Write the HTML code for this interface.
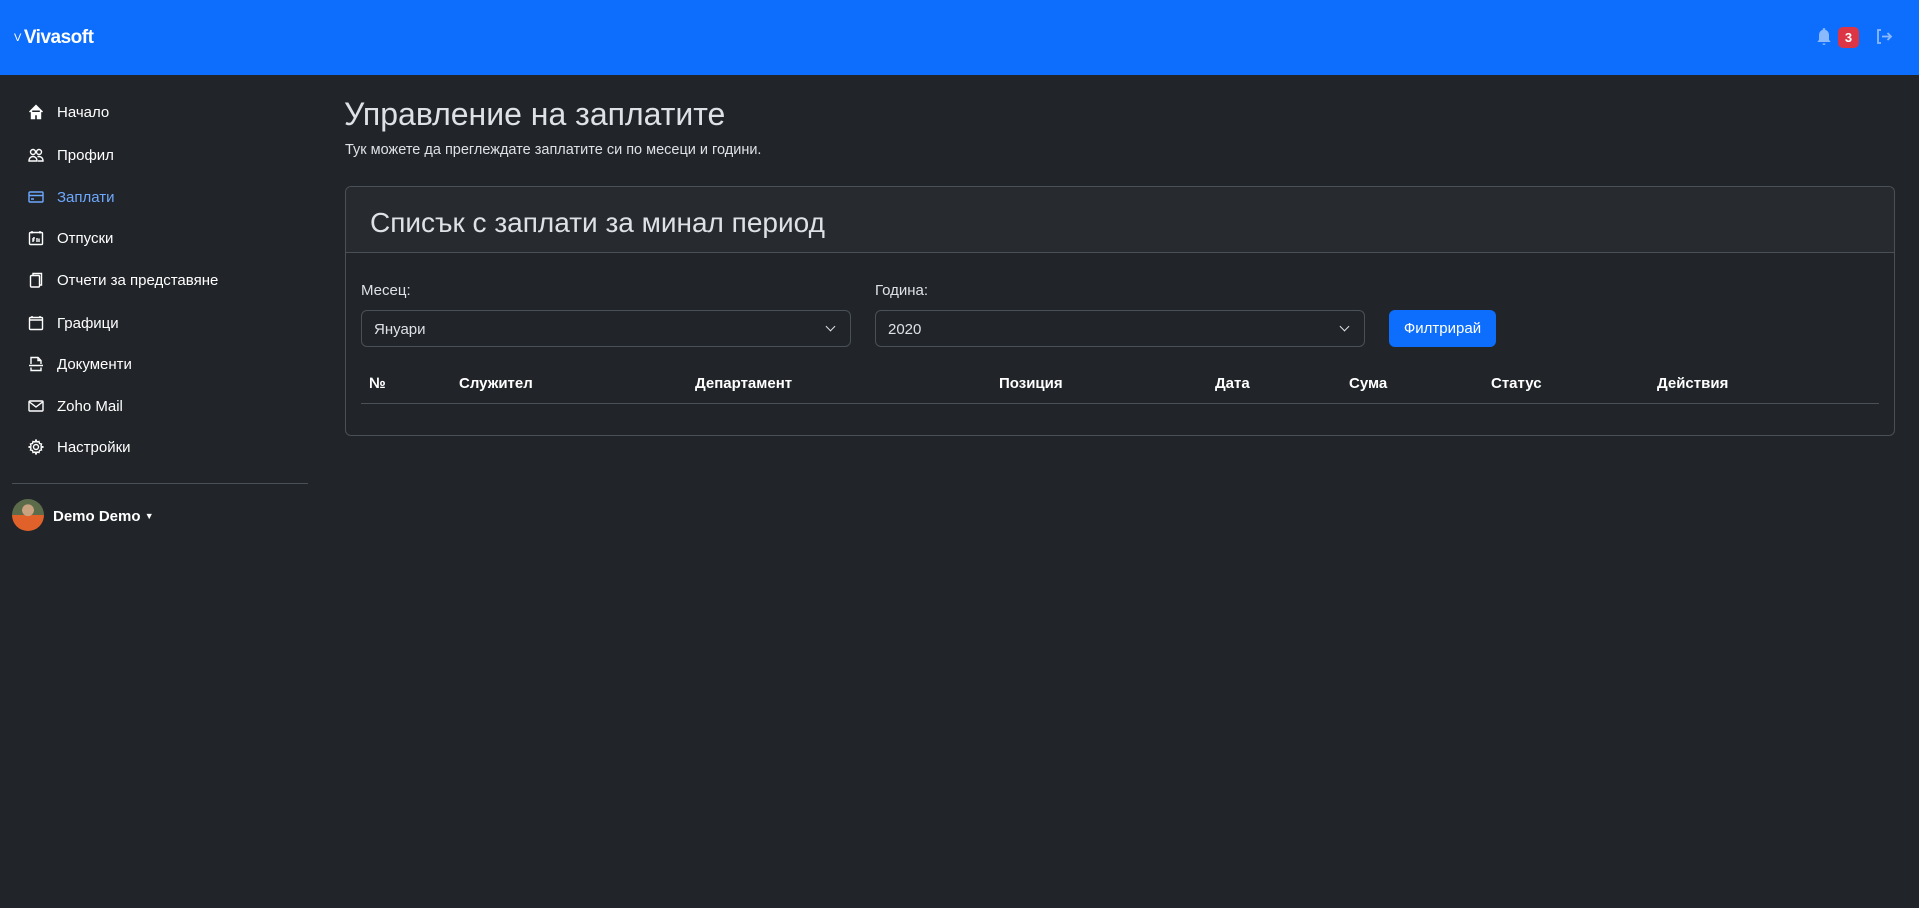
<!DOCTYPE html>
<html><head><meta charset="utf-8"><style>
*{box-sizing:border-box;margin:0;padding:0}
body{width:1919px;height:908px;background:#212529;color:#dee2e6;font-family:"Liberation Sans","Noto Sans CJK SC",sans-serif;position:relative;overflow:hidden}
.nav{position:absolute;left:0;top:0;width:1919px;height:75px;background:#0d6efd}
.logo{position:absolute;left:14px;top:27px;color:#fff;font-weight:bold;font-size:19px;letter-spacing:-0.5px}
.logo small{font-size:11px;font-weight:normal;margin-right:3px;position:relative;top:-2px}
.abs{position:absolute}
.item{position:absolute;left:28px;font-size:15px;color:#fff;display:flex;align-items:center;height:20px}
.item svg{width:16px;height:16px;margin-right:13px;fill:none;stroke:#fff;stroke-width:1.4}
.item.act{color:#6ea8fe}.item.act svg{stroke:#6ea8fe}
.card{position:absolute;left:345px;top:186px;width:1550px;height:250px;border:1px solid #495057;border-radius:6px;overflow:hidden}
.ch{height:66px;background:#272b30;border-bottom:1px solid #495057}
.sel{position:absolute;height:37px;border:1px solid #495057;border-radius:6px;font-size:15px;padding:10px 12px;color:#dee2e6}
.sel:after{content:"";position:absolute;right:16px;top:12px;width:6px;height:6px;border-right:1.5px solid #dee2e6;border-bottom:1.5px solid #dee2e6;transform:rotate(45deg)}
.th{position:absolute;top:375px;font-weight:bold;font-size:15px;color:#fff}
</style></head><body>
<div class="nav">
<div class="logo"><small>V</small>Vivasoft</div>
<svg class="abs" style="left:1817px;top:27px" width="14" height="20" viewBox="0 0 14 20"><path d="M7 1a1.3 1.3 0 0 1 1.3 1.3v.6A5 5 0 0 1 12 7.8v5l1.6 2.2H.4L2 12.8v-5a5 5 0 0 1 3.7-4.9v-.6A1.3 1.3 0 0 1 7 1z M5.5 16.5h3a1.5 1.5 0 0 1-3 0z" fill="#8bb9fe"/></svg>
<div class="abs" style="left:1838px;top:27px;width:21px;height:21px;background:#dc3545;border-radius:5px;color:#fff;font-size:13px;font-weight:bold;text-align:center;line-height:21px">3</div>
<svg class="abs" style="left:1876px;top:28px" width="17" height="17" viewBox="0 0 17 17" fill="none" stroke="#8bb9fe" stroke-width="1.8"><path d="M5 2H2v13h3M6 8.5h9M11.5 5l3.5 3.5-3.5 3.5"/></svg>
</div>

<div class="item" style="top:102px"><svg viewBox="0 0 16 16"><path d="M1.5 8L8 1.5 14.5 8M3.5 6.5V14.5h3v-4h3v4h3V6.5" fill="#fff"/></svg>Начало</div>
<div class="item" style="top:145px"><svg viewBox="0 0 16 16"><circle cx="5" cy="5" r="2.5"/><circle cx="11" cy="5" r="2.5"/><path d="M1 14c0-3 2-4.5 4-4.5s4 1.5 4 4.5zM9.5 9.7c.5-.2 1-.2 1.5-.2 2 0 4 1.5 4 4.5h-5"/></svg>Профил</div>
<div class="item act" style="top:187px"><svg viewBox="0 0 16 16"><rect x="1" y="3" width="14" height="10" rx="1"/><path d="M1 6.5h14M3 10h3"/></svg>Заплати</div>
<div class="item" style="top:228px"><svg viewBox="0 0 16 16"><rect x="1.5" y="2.5" width="13" height="12" rx="1"/><path d="M4 1v2.5M12 1v2.5M5 8v4M5 8h2M5 10h1.5M9 12V8M11 8.5v3.5"/></svg>Отпуски</div>
<div class="item" style="top:270px"><svg viewBox="0 0 16 16"><rect x="2.5" y="3.5" width="9" height="11.5" rx="1"/><path d="M5 3.5V1.5h8.5v11.5h-2"/></svg>Отчети за представяне</div>
<div class="item" style="top:313px"><svg viewBox="0 0 16 16"><rect x="1.5" y="2.5" width="13" height="12" rx="1"/><path d="M1.5 5h13M4 1v2M12 1v2"/></svg>Графици</div>
<div class="item" style="top:354px"><svg viewBox="0 0 16 16"><path d="M3 8V1.5h7l3 3V8M3 11.5v3h10v-3M1 9.5h14M10 1.5v3h3"/></svg>Документи</div>
<div class="item" style="top:396px"><svg viewBox="0 0 16 16"><rect x="1" y="3" width="14" height="10" rx="1"/><path d="M1.5 4l6.5 5 6.5-5"/></svg>Zoho Mail</div>
<div class="item" style="top:437px"><svg viewBox="0 0 16 16"><circle cx="8" cy="8" r="2.5"/><path d="M8 1l1 2 2-.5.5 2 2 .5-.5 2 2 1-2 1 .5 2-2 .5-.5 2-2-.5-1 2-1-2-2 .5-.5-2-2-.5.5-2-2-1 2-1-.5-2 2-.5.5-2 2 .5z"/></svg>Настройки</div>

<div class="abs" style="left:12px;top:483px;width:296px;height:1px;background:#495057"></div>
<div class="abs" style="left:12px;top:499px;width:32px;height:32px;border-radius:50%;background:radial-gradient(circle at 50% 35%,#c9a27f 0 22%,transparent 23%),linear-gradient(#5c6b4a 0 50%,#e0622a 50%)"></div>
<div class="abs" style="left:53px;top:508px;font-weight:bold;font-size:15px;color:#fff">Demo Demo <span style="font-size:9px;position:relative;top:-2px">▼</span></div>

<div class="abs" style="left:344px;top:96px;font-size:32px;color:#dee2e6">Управление на заплатите</div>
<div class="abs" style="left:345px;top:142px;font-size:14.5px">Тук можете да преглеждате заплатите си по месеци и години.</div>

<div class="card"><div class="ch"></div></div>
<div class="abs" style="left:370px;top:207px;font-size:28px;color:#dee2e6">Списък с заплати за минал период</div>
<div class="abs" style="left:361px;top:282px;font-size:15px">Месец:</div>
<div class="abs" style="left:875px;top:282px;font-size:15px">Година:</div>
<div class="sel" style="left:361px;top:310px;width:490px">Януари</div>
<div class="sel" style="left:875px;top:310px;width:490px">2020</div>
<div class="abs" style="left:1389px;top:310px;width:107px;height:37px;background:#0d6efd;border-radius:6px;color:#fff;font-size:15px;text-align:center;line-height:38px">Филтрирай</div>
<div class="th" style="left:369px">№</div>
<div class="th" style="left:459px">Служител</div>
<div class="th" style="left:695px">Департамент</div>
<div class="th" style="left:999px">Позиция</div>
<div class="th" style="left:1215px">Дата</div>
<div class="th" style="left:1349px">Сума</div>
<div class="th" style="left:1491px">Статус</div>
<div class="th" style="left:1657px">Действия</div>
<div class="abs" style="left:361px;top:403px;width:1518px;height:1px;background:#495057"></div>
</body></html>
